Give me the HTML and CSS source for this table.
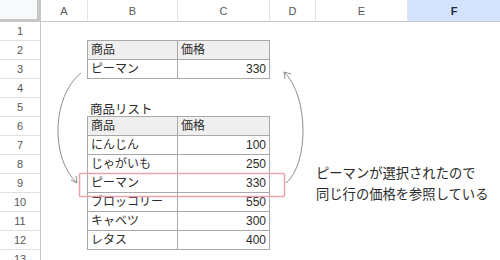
FILE: index.html
```html
<!DOCTYPE html>
<html lang="ja">

<head>
    <meta charset="UTF-8">
    <title>商品リスト</title>
    <link rel="stylesheet" href="styles.css">
</head>

<body>
    <div class="sheet">
        <!-- column headers -->
        <div class="corner"></div>
        <div class="col-head">A</div>
        <div class="col-head">B</div>
        <div class="col-head">C</div>
        <div class="col-head">D</div>
        <div class="col-head">E</div>
        <div class="col-head selected">F</div>

        <!-- row numbers -->
        <div class="row-head r1">1</div>
        <div class="row-head r2">2</div>
        <div class="row-head r3">3</div>
        <div class="row-head r4">4</div>
        <div class="row-head r5">5</div>
        <div class="row-head r6">6</div>
        <div class="row-head r7">7</div>
        <div class="row-head r8">8</div>
        <div class="row-head r9">9</div>
        <div class="row-head r10">10</div>
        <div class="row-head r11">11</div>
        <div class="row-head r12">12</div>
        <div class="row-head r13">13</div>

        <table class="lookup">
            <tr class="head"><td>商品</td><td>価格</td></tr>
            <tr><td>ピーマン</td><td class="num">330</td></tr>
        </table>

        <div class="list-title">商品リスト</div>

        <table class="list">
            <tr class="head"><td>商品</td><td>価格</td></tr>
            <tr><td>にんじん</td><td class="num">100</td></tr>
            <tr><td>じゃがいも</td><td class="num">250</td></tr>
            <tr><td>ピーマン</td><td class="num">330</td></tr>
            <tr><td>ブロッコリー</td><td class="num">550</td></tr>
            <tr><td>キャベツ</td><td class="num">300</td></tr>
            <tr><td>レタス</td><td class="num">400</td></tr>
        </table>

        <p class="note">ピーマンが選択されたので<br>同じ行の価格を参照している</p>

        <!-- arrows and highlight drawn over the cells -->
        <svg class="marks" width="500" height="260" viewBox="0 0 500 260">
            <rect x="79.5" y="173.5" width="205" height="23" rx="1" fill="none" stroke="#e9a3ac" stroke-width="1.5"/>
            <g fill="none" stroke="#8f8f8f" stroke-width="1">
                <path d="M81 73 C52 96, 50 158, 77 183"/>
                <path d="M71 180 L77 183 L76 176"/>
                <path d="M286 183 C309 164, 309 96, 284 72"/>
                <path d="M284 72 L291 74 M284 72 L285 79"/>
            </g>
        </svg>
    </div>
</body>

</html>
```

FILE: styles.css
```css
body {
    margin: 0;
    font-family: "Liberation Sans", "Noto Sans CJK JP", sans-serif;
    color: #2b2b2b;
    background: #fff;
    overflow: hidden;
}

.sheet {
    position: relative;
    display: grid;
    grid-template-columns: 41px 47px 90px 92px 46px 92px 92px;
    grid-template-rows: 22px repeat(13, 19px);
    width: 500px;
    height: 260px;
}

.corner {
    background: #f8f9fa;
    border-right: 4px solid #c4c7c5;
    border-bottom: 3px solid #c4c7c5;
}

.col-head {
    display: flex;
    align-items: center;
    justify-content: center;
    font-size: 11px;
    color: #575757;
    border-right: 1px solid #e1e1e1;
    border-bottom: 1px solid #c4c7c5;
}

.col-head.selected {
    background: #d3e3fd;
    color: #1f2a44;
    font-weight: bold;
    border-right: none;
}

.row-head {
    grid-column: 1;
    display: flex;
    align-items: center;
    justify-content: center;
    font-size: 11px;
    color: #575757;
    border-right: 1px solid #c4c7c5;
    border-bottom: 1px solid #e1e1e1;
}

.r1 { grid-row: 2; }
.r2 { grid-row: 3; }
.r3 { grid-row: 4; }
.r4 { grid-row: 5; }
.r5 { grid-row: 6; }
.r6 { grid-row: 7; }
.r7 { grid-row: 8; }
.r8 { grid-row: 9; }
.r9 { grid-row: 10; }
.r10 { grid-row: 11; }
.r11 { grid-row: 12; }
.r12 { grid-row: 13; }
.r13 { grid-row: 14; }

table {
    grid-column: 3 / 5;
    border-collapse: collapse;
    width: 183px;
    margin-left: -1px;
    margin-top: -1px;
    font-size: 12px;
    align-self: start;
}

td {
    height: 18px;
    padding: 0 3px;
    border: 1px solid #a8a8a8;
    line-height: 18px;
    white-space: nowrap;
}

td:first-child {
    width: 83px;
}

.head td {
    background: #efefef;
}

.num {
    text-align: right;
}

.lookup {
    grid-row: 3 / 5;
}

.list {
    grid-row: 7 / 14;
}

.list-title {
    grid-column: 3 / 5;
    grid-row: 6;
    align-self: end;
    padding-left: 2px;
    margin-bottom: -2px;
    font-size: 12.5px;
    line-height: 18px;
}

.note {
    grid-column: 6 / 8;
    grid-row: 9 / 12;
    margin: 8px 0 0 0;
    font-size: 13.3px;
    line-height: 21px;
    color: #2a2a2a;
    white-space: nowrap;
}

.marks {
    position: absolute;
    left: 0;
    top: 0;
    pointer-events: none;
}
```
